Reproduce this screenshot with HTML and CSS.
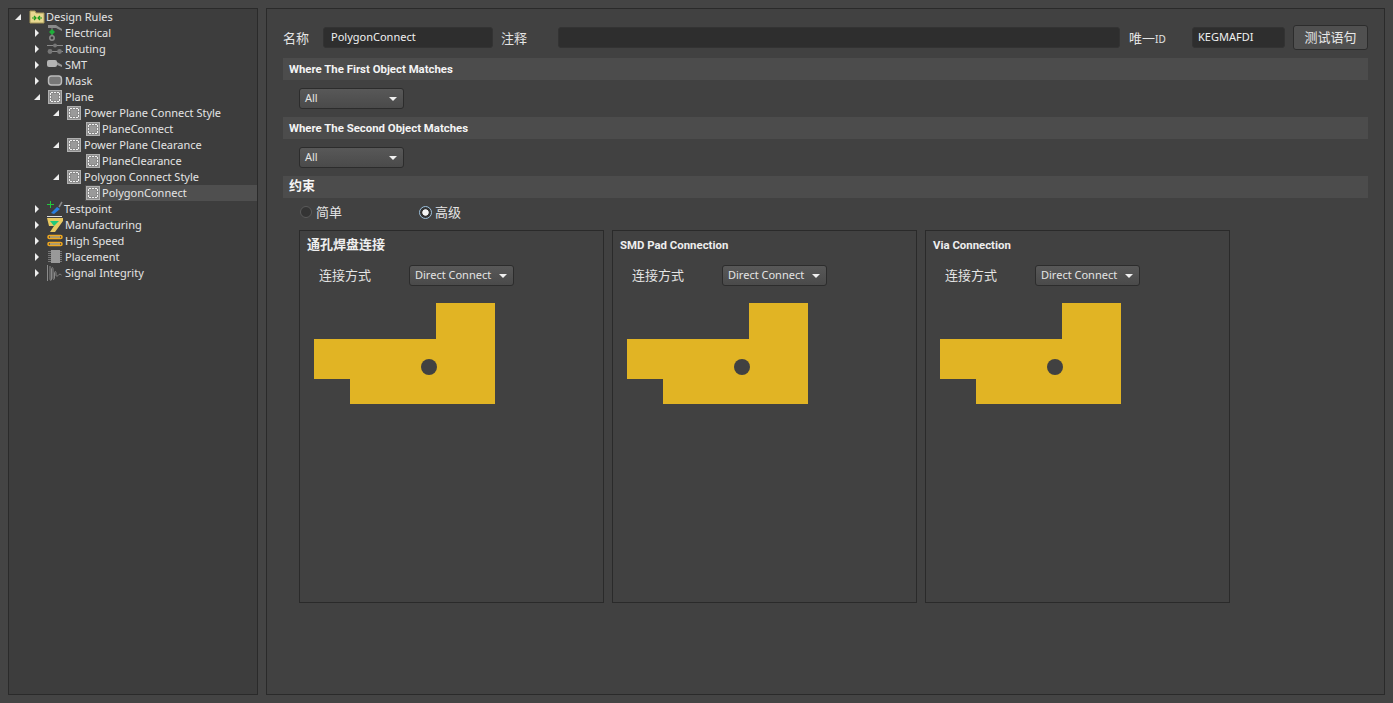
FILE: index.html
```html
<!DOCTYPE html>
<html lang="zh">
<head>
    <meta charset="UTF-8">
    <meta name="viewport" content="width=device-width, initial-scale=1.0">
    <title>Design Rules - PolygonConnect</title>
    <link rel="stylesheet" href="styles.css">
</head>
<body>
    <svg class="defs" width="0" height="0">
        <symbol id="plane" viewBox="0 0 14 14">
            <rect width="14" height="14" fill="#b0b0b0"/>
            <rect x="1" y="1" width="12" height="12" fill="#8c8c8c"/>
            <rect x="4" y="4" width="6" height="6" fill="#9a9a9a"/>
            <path d="M3 2h2v1H3zM6 2h2v1H6zM9 2h2v1H9zM3 11h2v1H3zM6 11h2v1H6zM9 11h2v1H9zM2 3h1v2H2zM2 6h1v2H2zM2 9h1v2H2zM11 3h1v2h-1zM11 6h1v2h-1zM11 9h1v2h-1z" fill="#f0f0f0"/>
        </symbol>
    </svg>
    <div class="tree">
        <div class="row lv0"><i class="open"></i>
            <svg class="ico" viewBox="0 0 16 14"><path d="M1 3V1h5l1 2h8v10H1z" fill="#e8d890" stroke="#a89a5a"/><path d="M3 8h4M5 6l2 2-2 2M13 8H9M11 6L9 8l2 2" fill="none" stroke="#1c9a1c" stroke-width="1.2"/></svg>
            <span>Design Rules</span></div>
        <div class="row lv1"><i class="shut"></i>
            <svg class="ico" viewBox="0 0 16 16"><path d="M1 0h8l6 4v2L9 3H1z" fill="#8a8a8a"/><path d="M5 3v2M5 9v2" stroke="#888"/><path d="M5 4l3 3-3 3-3-3z" fill="#1fae3a"/><circle cx="5" cy="13" r="2.2" fill="none" stroke="#8a8a8a" stroke-width="1.5"/></svg>
            <span>Electrical</span></div>
        <div class="row lv1"><i class="shut"></i>
            <svg class="ico" viewBox="0 0 16 16"><path d="M0 4.500h16M1 10.500h15" stroke="#8a8a8a"/><circle cx="8" cy="4.500" r="2" fill="#777"/><circle cx="3" cy="10.500" r="2.400" fill="#777"/><circle cx="12.500" cy="10.500" r="2.400" fill="#777"/></svg>
            <span>Routing</span></div>
        <div class="row lv1"><i class="shut"></i>
            <svg class="ico" viewBox="0 0 16 16"><rect x="0" y="3" width="10" height="7" rx="2" fill="#b4b4b4"/><path d="M10 5l5 3v2l-5-2z" fill="#999"/></svg>
            <span>SMT</span></div>
        <div class="row lv1"><i class="shut"></i>
            <svg class="ico" viewBox="0 0 16 16"><rect x="1.500" y="3" width="13" height="9" rx="3" fill="#777" stroke="#bbb" stroke-width="1.400"/></svg>
            <span>Mask</span></div>
        <div class="row lv1"><i class="open"></i><svg class="ico sq"><use href="#plane"/></svg><span>Plane</span></div>
        <div class="row lv2"><i class="open"></i><svg class="ico sq"><use href="#plane"/></svg><span>Power Plane Connect Style</span></div>
        <div class="row lv3"><svg class="ico sq"><use href="#plane"/></svg><span>PlaneConnect</span></div>
        <div class="row lv2"><i class="open"></i><svg class="ico sq"><use href="#plane"/></svg><span>Power Plane Clearance</span></div>
        <div class="row lv3"><svg class="ico sq"><use href="#plane"/></svg><span>PlaneClearance</span></div>
        <div class="row lv2"><i class="open"></i><svg class="ico sq"><use href="#plane"/></svg><span>Polygon Connect Style</span></div>
        <div class="row lv3 selected"><svg class="ico sq"><use href="#plane"/></svg><span>PolygonConnect</span></div>
        <div class="row lv1"><i class="shut"></i>
            <svg class="ico" viewBox="0 0 16 16"><path d="M3.500 0v7M0 3.500h7" stroke="#22c83c"/><path d="M4 12l6-6 3 2-6 5z" fill="#2a7fe0"/><path d="M12 6l3-5" stroke="#888" stroke-width="1.500"/><path d="M0 15.500h15" stroke="#ddd"/></svg>
            <span class="tight">Testpoint</span></div>
        <div class="row lv1"><i class="shut"></i>
            <svg class="ico" viewBox="0 0 16 16"><path d="M0 1h16v3L8 15H3l4-6H2z" fill="#e8c860"/><path d="M3 4h9L7 9z" fill="#1fc87a"/></svg>
            <span>Manufacturing</span></div>
        <div class="row lv1"><i class="shut"></i>
            <svg class="ico" viewBox="0 0 16 16"><g fill="none" stroke="#f0a820" stroke-width="1.600"><rect x="1" y="2.500" width="14" height="3" rx="1.500"/><rect x="1" y="9.500" width="14" height="3" rx="1.500"/></g><path d="M3 4h10M3 11h10" stroke="#f4e0a0"/></svg>
            <span>High Speed</span></div>
        <div class="row lv1"><i class="shut"></i>
            <svg class="ico" viewBox="0 0 16 16"><rect x="4" y="1" width="9" height="13" fill="#999"/><path d="M1 2.500h3M1 4.500h3M1 6.500h3M1 8.500h3M1 10.500h3M1 12.500h3M13 2.500h2M13 4.500h2M13 6.500h2M13 8.500h2M13 10.500h2M13 12.500h2" stroke="#777"/></svg>
            <span>Placement</span></div>
        <div class="row lv1"><i class="shut"></i>
            <svg class="ico" viewBox="0 0 16 16"><path d="M.5 0v16M3 1v13c0 2 1.500 2 1.500 0V4c0-2 1.500-2 1.500 0v9c0 2 1.500 2 1.500 0V8c0-2 1.500-2 1.500 0v2c0 2 2 1 2.500 0s2-1 3 0" fill="none" stroke="#8a8a8a"/></svg>
            <span>Signal Integrity</span></div>
    </div>

    <div class="editor">
        <div class="head">
            <label class="cjk name-label">名称</label>
            <div class="field name-field">PolygonConnect</div>
            <label class="cjk note-label">注释</label>
            <div class="field note-field"></div>
            <label class="cjk id-label">唯一<span class="latin">ID</span></label>
            <div class="field id-field">KEGMAFDI</div>
            <button class="cjk">测试语句</button>
        </div>

        <div class="bar">Where The First Object Matches</div>
        <div class="line"><div class="combo small"><span>All</span><b></b></div></div>

        <div class="bar">Where The Second Object Matches</div>
        <div class="line"><div class="combo small"><span>All</span><b></b></div></div>

        <div class="bar cjk">约束</div>
        <div class="radios">
            <div class="radio cjk"><i></i>简单</div>
            <div class="radio cjk on"><i></i>高级</div>
        </div>

        <div class="groups">
            <div class="group">
                <div class="title cjk">通孔焊盘连接</div>
                <div class="conn"><span class="cjk">连接方式</span><div class="combo"><span>Direct Connect</span><b></b></div></div>
                <svg class="shape" width="181" height="101" viewBox="0 0 181 101"><path d="M122 0h59v101H36V76H0V36h122z" fill="#e1b424"/><circle cx="115" cy="64" r="8" fill="#414141"/></svg>
            </div>
            <div class="group">
                <div class="title">SMD Pad Connection</div>
                <div class="conn"><span class="cjk">连接方式</span><div class="combo"><span>Direct Connect</span><b></b></div></div>
                <svg class="shape" width="181" height="101" viewBox="0 0 181 101"><path d="M122 0h59v101H36V76H0V36h122z" fill="#e1b424"/><circle cx="115" cy="64" r="8" fill="#414141"/></svg>
            </div>
            <div class="group">
                <div class="title">Via Connection</div>
                <div class="conn"><span class="cjk">连接方式</span><div class="combo"><span>Direct Connect</span><b></b></div></div>
                <svg class="shape" width="181" height="101" viewBox="0 0 181 101"><path d="M122 0h59v101H36V76H0V36h122z" fill="#e1b424"/><circle cx="115" cy="64" r="8" fill="#414141"/></svg>
            </div>
        </div>
    </div>
</body>
</html>
```

FILE: styles.css
```css
* {
    box-sizing: border-box;
}
html, body {
    height: 100%;
}
body {
    margin: 0;
    padding: 8px;
    display: flex;
    gap: 8px;
    background: #444;
    color: #e4e4e4;
    font-family: "Noto Sans", "Noto Sans CJK SC", sans-serif;
    font-size: 11px;
    overflow: hidden;
}
.defs {
    position: absolute;
}
.cjk {
    font-family: "Noto Sans CJK SC", sans-serif;
    font-size: 13px;
}
.latin {
    font-family: "Noto Sans", sans-serif;
    font-size: 10px;
}

/* tree */
.tree {
    width: 250px;
    flex: none;
    border: 1px solid #2a2a2a;
    background: #3d3d3d;
}
.row {
    height: 16px;
    display: flex;
    align-items: center;
    line-height: 16px;
    white-space: nowrap;
}
.row span {
    margin-left: 2px;
    padding-right: 2px;
}
.row span.tight {
    margin-left: 1px;
}
.lv0 { padding-left: 5px; }
.lv0 span { margin-left: 1px; }
.lv1 { padding-left: 24px; }
.lv2 { padding-left: 43px; }
.lv3 { padding-left: 77px; }
.row i {
    width: 0;
    height: 0;
    flex: none;
}
.row i.shut {
    margin-left: 2px;
    margin-right: 8px;
    border-top: 4px solid transparent;
    border-bottom: 4px solid transparent;
    border-left: 4px solid #eee;
}
.row i.open {
    margin-left: 1px;
    margin-right: 7px;
    border-left: 6px solid transparent;
    border-bottom: 6px solid #eee;
}
.lv0 i.open {
    margin-right: 8px;
}
.ico {
    width: 16px;
    height: 16px;
    flex: none;
}
.ico.sq {
    width: 14px;
    height: 14px;
    margin: 0 1px;
}
.lv3 .ico.sq {
    margin: 0;
}
.selected {
    background: linear-gradient(#4f4f4f, #4f4f4f) no-repeat 76px 0;
}

/* right side */
.editor {
    flex: 1;
    padding: 16px 16px 0;
    border: 1px solid #2a2a2a;
    background: #414141;
}
.head {
    height: 25px;
    margin-bottom: 8px;
    display: flex;
    align-items: center;
}
.head label {
    padding-bottom: 1px;
}
.field {
    height: 21px;
    padding-left: 7px;
    line-height: 18px;
    border: 1px solid #333;
    border-radius: 3px;
    background: #2e2e2e;
    color: #f0f0f0;
}
.name-label { width: 40px; }
.name-field { width: 170px; }
.note-label { width: 57px; margin-left: 8px; }
.note-field { width: 562px; }
.id-label { width: 63px; margin-left: 9px; }
.id-field { width: 93px; padding-left: 5px; }
button {
    width: 75px;
    height: 25px;
    margin-left: 8px;
    padding: 0 0 2px;
    border: 1px solid #2c2c2c;
    border-radius: 3px;
    background: #505050;
    color: #e8e8e8;
}
.bar {
    height: 22px;
    padding-left: 6px;
    line-height: 23px;
    background: #4c4c4c;
    color: #f4f4f4;
    font-family: Roboto, sans-serif;
    font-size: 11.4px;
    font-weight: 700;
}
.bar.cjk {
    line-height: 17px;
    font-family: "Noto Sans CJK SC", sans-serif;
    font-size: 13px;
}
.line {
    height: 37px;
    padding: 8px 0 0 16px;
}
.combo {
    width: 105px;
    height: 21px;
    padding: 0 5px 2px;
    display: flex;
    align-items: center;
    justify-content: space-between;
    border: 1px solid #2c2c2c;
    border-radius: 3px;
    background: linear-gradient(#585858, #4a4a4a);
    color: #e4e4e4;
}
.combo b {
    width: 0;
    height: 0;
    margin: 2px 1px 0 0;
    border-left: 4px solid transparent;
    border-right: 4px solid transparent;
    border-top: 4px solid #f0f0f0;
}
.radios {
    height: 33px;
    padding: 5px 0 0 17px;
    display: flex;
}
.radio {
    width: 119px;
    height: 18px;
    display: flex;
    align-items: center;
    gap: 4px;
    line-height: 16px;
}
.radio i {
    width: 12px;
    height: 12px;
    border: 1px solid #5a5a5a;
    border-radius: 50%;
    background: #343434;
}
.radio.on i {
    width: 13px;
    height: 13px;
    margin-right: -1px;
    border: 1px solid #9cc0dc;
    background: radial-gradient(circle, #f4f4f4 0 2.8px, #333 3.6px);
}
.groups {
    margin-top: -1px;
    padding-left: 16px;
    display: flex;
    gap: 8px;
}
.group {
    width: 305px;
    height: 373px;
    padding: 6px 0 0 14px;
    border: 1px solid #2a2a2a;
}
.title {
    height: 16px;
    margin-left: -7px;
    line-height: 16px;
    font-family: Roboto, sans-serif;
    font-size: 11.4px;
    font-weight: 700;
    color: #eee;
}
.title.cjk {
    line-height: 14px;
    font-family: "Noto Sans CJK SC", sans-serif;
    font-size: 13px;
}
.conn {
    height: 21px;
    margin-top: 12px;
    margin-left: 5px;
    display: flex;
    align-items: center;
}
.conn > span.cjk {
    width: 90px;
    padding-bottom: 2px;
}
.shape {
    display: block;
    margin-top: 17px;
}
```
